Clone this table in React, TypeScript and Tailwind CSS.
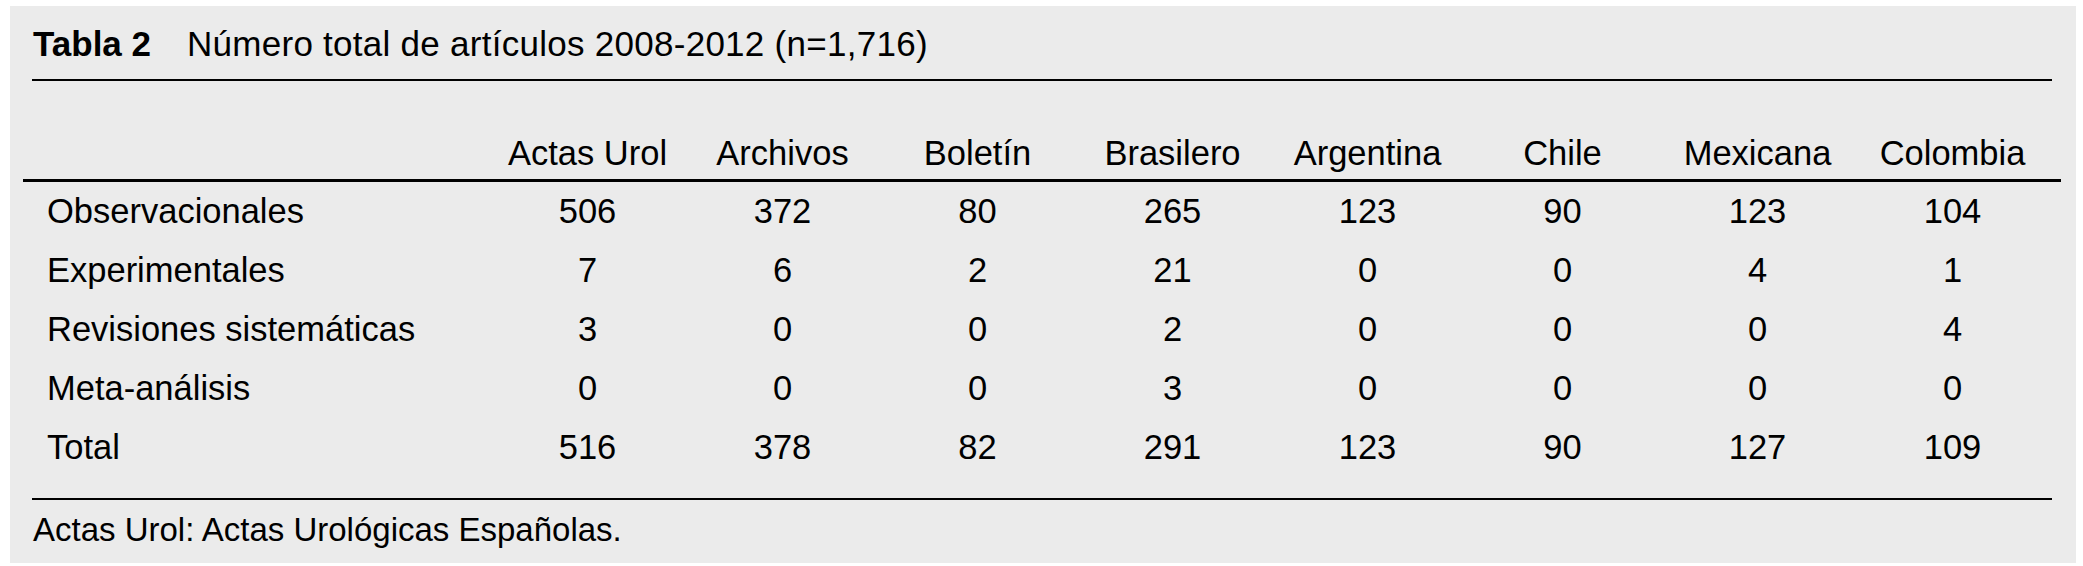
const columns = [
  "Actas Urol",
  "Archivos",
  "Boletín",
  "Brasilero",
  "Argentina",
  "Chile",
  "Mexicana",
  "Colombia",
];

const rows: { label: string; values: number[] }[] = [
  { label: "Observacionales", values: [506, 372, 80, 265, 123, 90, 123, 104] },
  { label: "Experimentales", values: [7, 6, 2, 21, 0, 0, 4, 1] },
  { label: "Revisiones sistemáticas", values: [3, 0, 0, 2, 0, 0, 0, 4] },
  { label: "Meta-análisis", values: [0, 0, 0, 3, 0, 0, 0, 0] },
  { label: "Total", values: [516, 378, 82, 291, 123, 90, 127, 109] },
];

const gridCols = "grid grid-cols-[458px_repeat(8,195px)]";

export default function App() {
  return (
    <div className="min-h-[566px] w-[2083px] bg-white pt-[6px] pl-[10px] font-['Liberation_Sans',Arial,sans-serif] text-black">
      <div className="flex h-[557px] w-[2066px] flex-col bg-[#ebebeb] pt-[18px] pr-[24px] pl-[22px]">
        <h2 className="ml-px flex h-[40px] items-center text-[35px] leading-[40px]">
          <span className="font-bold">Tabla 2</span>
          <span className="ml-[36px] tracking-[0.27px]">
            Número total de artículos 2008-2012 (n=1,716)
          </span>
        </h2>
        <div className="mt-[15px] h-[2px] bg-black" />

        <div className={`${gridCols} mt-[52px] text-[34.5px] leading-[40px]`}>
          <div />
          {columns.map((c) => (
            <div key={c} className="text-center">
              {c}
            </div>
          ))}
        </div>
        <div className="-mx-[9px] mt-[6px] h-[3px] bg-black" />

        <div className="text-[34.5px] leading-[59px]">
          {rows.map((row) => (
            <div key={row.label} className={gridCols}>
              <div className="pl-[15px]">{row.label}</div>
              {row.values.map((v, i) => (
                <div key={i} className="text-center">
                  {v}
                </div>
              ))}
            </div>
          ))}
        </div>

        <div className="mt-[21px] h-[2px] bg-black" />
        <p className="mt-[10px] ml-px text-[33px] leading-[40px]">
          Actas Urol: Actas Urológicas Españolas.
        </p>
      </div>
    </div>
  );
}
